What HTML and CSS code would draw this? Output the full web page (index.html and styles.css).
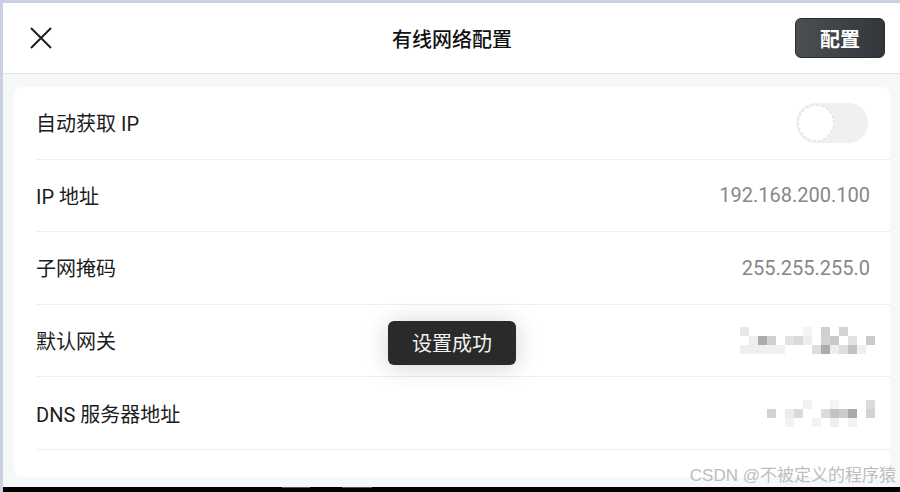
FILE: index.html
```html
<!DOCTYPE html>
<html lang="zh-CN">

<head>
    <meta charset="UTF-8">
    <meta name="viewport" content="width=device-width, initial-scale=1.0">
    <title>有线网络配置</title>
    <link rel="stylesheet" href="styles.css">
</head>

<body>
    <div class="screen">
        <!-- 顶部栏 -->
        <div class="header">
            <span class="closeBtn">
                <svg width="22" height="22" viewBox="0 0 22 22">
                    <path d="M1 1 L21 21 M21 1 L1 21" stroke="#1f1f1f" stroke-width="2" fill="none" />
                </svg>
            </span>
            <span class="title">有线网络配置</span>
            <button class="saveBtn">配置</button>
        </div>

        <!-- 配置列表 -->
        <div class="content">
            <div class="card">
                <div class="row">
                    <span class="label">自动获取 IP</span>
                    <span class="switch"><span class="knob"></span></span>
                </div>
                <div class="row">
                    <span class="label">IP 地址</span>
                    <span class="value">192.168.200.100</span>
                </div>
                <div class="row">
                    <span class="label">子网掩码</span>
                    <span class="value">255.255.255.0</span>
                </div>
                <div class="row">
                    <span class="label">默认网关</span>
                    <svg class="mosaic" width="135" height="27" viewBox="0 0 135 27">
                        <rect x="0" y="0" width="9" height="9" fill="#e8e8e8" />
                        <rect x="63" y="0" width="9" height="9" fill="#f4f4f4" />
                        <rect x="81" y="0" width="9" height="9" fill="#cfcfcf" />
                        <rect x="99" y="0" width="9" height="9" fill="#d4d4d4" />
                        <rect x="9" y="9" width="9" height="9" fill="#eeeeee" />
                        <rect x="18" y="9" width="9" height="9" fill="#ababab" />
                        <rect x="27" y="9" width="9" height="9" fill="#d0d0d0" />
                        <rect x="45" y="9" width="9" height="9" fill="#e2e2e2" />
                        <rect x="54" y="9" width="9" height="9" fill="#d9d9d9" />
                        <rect x="63" y="9" width="9" height="9" fill="#eeeeee" />
                        <rect x="81" y="9" width="9" height="9" fill="#d2d2d2" />
                        <rect x="90" y="9" width="9" height="9" fill="#c9c9c9" />
                        <rect x="108" y="9" width="9" height="9" fill="#e2e2e2" />
                        <rect x="126" y="9" width="9" height="9" fill="#cacaca" />
                        <rect x="0" y="18" width="45" height="9" fill="#efefef" />
                        <rect x="72" y="18" width="9" height="9" fill="#dedede" />
                        <rect x="81" y="18" width="9" height="9" fill="#acacac" />
                        <rect x="90" y="18" width="9" height="9" fill="#eeeeee" />
                        <rect x="99" y="18" width="9" height="9" fill="#dddddd" />
                        <rect x="108" y="18" width="9" height="9" fill="#c3c3c3" />
                        <rect x="117" y="18" width="9" height="9" fill="#f0f0f0" />
                    </svg>
                </div>
                <div class="row">
                    <span class="label">DNS 服务器地址</span>
                    <svg class="mosaic" width="108" height="27" viewBox="0 0 108 27">
                        <rect x="36" y="0" width="9" height="9" fill="#f2f2f2" />
                        <rect x="63" y="0" width="9" height="9" fill="#f4f4f4" />
                        <rect x="99" y="0" width="9" height="9" fill="#dcdcdc" />
                        <rect x="0" y="9" width="9" height="9" fill="#d3d3d3" />
                        <rect x="18" y="9" width="9" height="9" fill="#ececec" />
                        <rect x="27" y="9" width="9" height="9" fill="#dadada" />
                        <rect x="54" y="9" width="9" height="9" fill="#dcdcdc" />
                        <rect x="63" y="9" width="9" height="9" fill="#c4c4c4" />
                        <rect x="72" y="9" width="9" height="9" fill="#cbcbcb" />
                        <rect x="81" y="9" width="9" height="9" fill="#a9a9a9" />
                        <rect x="99" y="9" width="9" height="9" fill="#d2d2d2" />
                        <rect x="18" y="18" width="9" height="9" fill="#f3f3f3" />
                        <rect x="45" y="18" width="9" height="9" fill="#f3f3f3" />
                        <rect x="63" y="18" width="9" height="9" fill="#eeeeee" />
                        <rect x="81" y="18" width="9" height="9" fill="#f2f2f2" />
                    </svg>
                </div>
                <!-- 下一行被滚动挡住了 -->
                <div class="row"></div>
            </div>
        </div>

        <!-- 底部黑边 -->
        <div class="bottomBar">
            <span class="bar1"></span>
            <span class="bar2"></span>
        </div>

        <!-- 提示 -->
        <div class="toast">设置成功</div>
        <div class="mark">CSDN @不被定义的程序猿</div>
    </div>
</body>

</html>
```

FILE: styles.css
```css
* {
    box-sizing: border-box;
}

body {
    margin: 0;
    font-family: "Roboto", "Noto Sans CJK SC", sans-serif;
    background: #000;
}

.screen {
    position: relative;
    width: 900px;
    height: 492px;
    overflow: hidden;
    display: flex;
    flex-direction: column;
    border-top: 3px solid #c9d1e2;
    border-left: 3px solid #c9d1e2;
    background: #f6f7f9;
}

.header {
    height: 71px;
    flex: none;
    display: flex;
    align-items: center;
    justify-content: space-between;
    padding: 0 15px 0 27px;
    background: #fff;
    border-bottom: 1px solid #e2e3e6;
}

.closeBtn {
    width: 22px;
    height: 22px;
    display: flex;
}

.title {
    font-size: 20px;
    font-weight: 500;
    color: #111;
    margin-left: 57px;
}

.saveBtn {
    width: 90px;
    height: 40px;
    border: 1px solid #2b2e30;
    border-radius: 6px;
    background: linear-gradient(90deg, #4b4f52, #33363a);
    color: #fff;
    font-family: "Noto Sans CJK SC", sans-serif;
    font-size: 20px;
    font-weight: bold;
    padding: 0;
}

.content {
    flex: 1;
    padding: 13px 10px 10px 11px;
    overflow: hidden;
}

.card {
    height: 390px;
    background: #fff;
    border-radius: 7px;
    padding-left: 22px;
    overflow: hidden;
}

.row {
    height: 72.6px;
    display: flex;
    align-items: center;
    justify-content: space-between;
    padding-right: 20px;
    border-bottom: 1px solid #eeeff1;
}

.label {
    font-size: 20px;
    color: #1c1c1c;
}

.value {
    font-size: 20px;
    color: #878787;
}

.mosaic {
    display: block;
    margin-right: -5px;
}

.switch {
    width: 72px;
    height: 40px;
    border-radius: 20px;
    background: #f0f0f0;
    padding: 2px;
    margin-right: 2px;
}

.knob {
    display: block;
    width: 36px;
    height: 36px;
    border-radius: 50%;
    background: #fff;
    border: 1px dashed #dcdcdc;
}

.bottomBar {
    height: 5px;
    flex: none;
    background: #000;
    position: relative;
}

.bar1,
.bar2 {
    position: absolute;
    top: 0;
    height: 1px;
    background: #555;
}

.bar1 {
    left: 279px;
    width: 28px;
}

.bar2 {
    left: 339px;
    width: 30px;
}

.toast {
    position: absolute;
    left: 385px;
    top: 318px;
    width: 128px;
    height: 44px;
    line-height: 44px;
    text-align: center;
    border-radius: 6px;
    background: #2a2a2a;
    color: #f2f2f2;
    font-family: "Noto Sans CJK SC", sans-serif;
    font-size: 20px;
    box-shadow: 0 2px 24px rgba(0, 0, 0, .18);
}

.mark {
    position: absolute;
    right: 4px;
    bottom: 6px;
    font-family: "Liberation Sans", "Noto Sans CJK SC", sans-serif;
    font-size: 17px;
    color: #bdbdbd;
    text-shadow: 0 0 2px #fff;
}
```
